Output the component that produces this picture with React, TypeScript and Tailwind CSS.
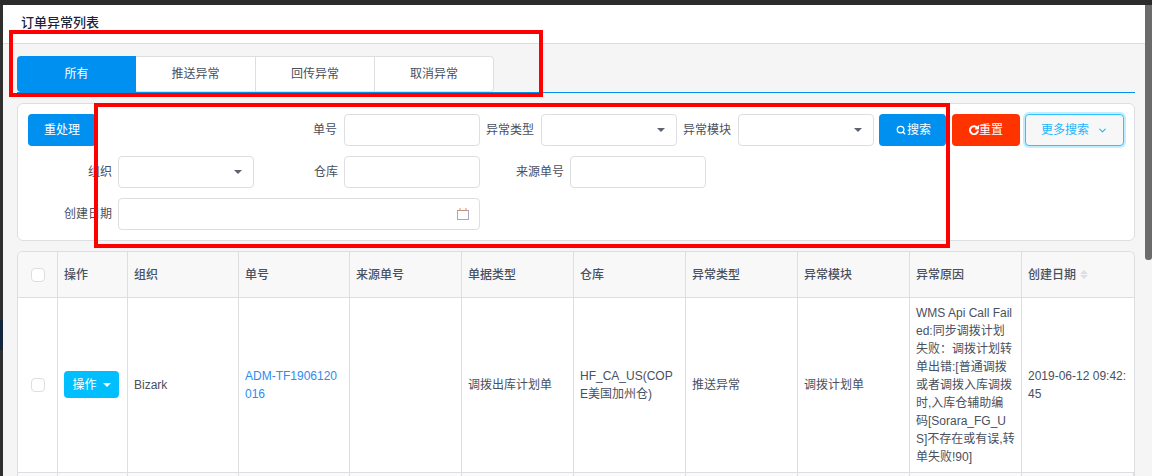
import type { ReactNode } from 'react'
import { ChevronDown, Search } from 'lucide-react'

const font = "font-['Liberation_Sans','Noto_Sans_CJK_SC',sans-serif]"

function Caret({ className = 'border-t-[#5c6270]' }: { className?: string }) {
  return <span className={`block h-0 w-0 border-x-[4px] border-t-[4px] border-x-transparent ${className}`} />
}

function Label({ children, className = '' }: { children: string; className?: string }) {
  return <span className={`shrink-0 text-right text-[12px] leading-8 text-[#495060] ${className}`}>{children}</span>
}

function Input({ className = 'w-[136px]' }: { className?: string }) {
  return <div className={`h-8 shrink-0 rounded border border-[#dddee1] bg-white ${className}`} />
}

function Select() {
  return (
    <div className="flex h-8 w-[136px] shrink-0 items-center justify-end rounded border border-[#dddee1] bg-white pr-[11px]">
      <Caret />
    </div>
  )
}

function CalendarIcon() {
  return (
    <svg width="14" height="14" viewBox="0 0 14 14" fill="none">
      <rect x="1.5" y="3.5" width="11" height="9" stroke="#a9a3c4" />
      <path d="M1.5 3.5h11M4 1v2.5M10 1v2.5" stroke="#c98f7d" />
    </svg>
  )
}

function Th({ children, className = '' }: { children?: ReactNode; className?: string }) {
  return (
    <div className={`flex h-[45px] items-center border-r border-[#dddee1] px-[6px] text-[12px] font-medium text-[#495060] ${className}`}>
      {children}
    </div>
  )
}

function Td({ children, className = '' }: { children?: ReactNode; className?: string }) {
  return (
    <div className={`flex items-center border-r border-[#dddee1] px-[6px] text-[12px] leading-[18px] text-[#495060] ${className}`}>
      <div className="min-w-0 break-all">{children}</div>
    </div>
  )
}

const grid = 'grid grid-cols-[40px_70px_111px_111px_112px_112px_112px_112px_112px_112px_112px]'

export default function App() {
  return (
    <div className={`relative h-[476px] w-[1152px] overflow-hidden bg-[#f5f5f5] ${font}`}>
      <div className="h-[5px] bg-[#2b2b2b]" />
      <div className="flex">
        <div className="h-[471px] w-[3px] shrink-0 bg-[#2f2f2f]">
          <div className="mt-[315px] h-[30px] bg-[#14263c]" />
        </div>
        <div className="w-[1142px] shrink-0">
          <div className="flex h-[39px] items-center border-b border-[#dddddd] bg-white pb-[4px] pl-[18px] text-[13px] font-medium leading-none text-[#1c2438]">
            订单异常列表
          </div>
          <div className="ml-[14px] mr-[10px] mt-[12px] flex h-[37px] border-b border-[#0090f0] text-[12px] text-[#495060]">
            <div className="flex h-[36px] w-[119px] items-center justify-center rounded-l bg-[#0090f0] text-white">所有</div>
            <div className="flex h-[36px] w-[120px] items-center justify-center border-y border-r border-[#dddee1] bg-white">推送异常</div>
            <div className="flex h-[36px] w-[119px] items-center justify-center border-y border-r border-[#dddee1] bg-white">回传异常</div>
            <div className="flex h-[36px] w-[119px] items-center justify-center rounded-r border-y border-r border-[#dddee1] bg-white">取消异常</div>
          </div>
          <div className="ml-[14px] mr-[10px] mt-[10px] h-[138px] rounded-md border border-[#dddee1] bg-white px-[10px] pt-[10px]">
            <div className="flex h-8 items-center">
              <button className="h-8 w-[68px] rounded bg-[#0090f0] text-[12px] text-white">重处理</button>
              <Label className="ml-[210px] w-[31px]">单号</Label>
              <Input className="ml-[7px] w-[136px]" />
              <Label className="ml-[6px] w-[48px]">异常类型</Label>
              <div className="ml-[7px]"><Select /></div>
              <Label className="ml-[6px] w-[48px]">异常模块</Label>
              <div className="ml-[7px]"><Select /></div>
              <button className="ml-[5px] flex h-8 w-[67px] items-center justify-center gap-px rounded bg-[#0090f0] pl-[2px] text-[12px] text-white">
                <Search size={10} strokeWidth={3} />搜索
              </button>
              <button className="ml-[6px] flex h-8 w-[68px] items-center justify-center rounded bg-[#ff3300] text-[12px] text-white">
                <svg width="10" height="10" viewBox="0 0 10 10" fill="none" stroke="white" strokeWidth="2"><path d="M8.5 3.2A4 4 0 1 0 9 5.5" /><path d="M9.5 0.5v3.5h-3.5" strokeWidth="1" fill="white" /></svg>
                重置
              </button>
              <button className="ml-[5px] flex h-8 w-[99px] items-center justify-center gap-2 rounded border border-[#33c2ff] bg-[#f7f7f7] text-[12px] text-[#19b5fe] shadow-[0_0_0_2px_rgba(51,194,255,0.3)]">
                更多搜索<ChevronDown size={11} strokeWidth={2.5} className="text-[#2bb3ee]" />
              </button>
            </div>
            <div className="mt-[10px] flex h-8 items-center">
              <Label className="w-[84px]">组织</Label>
              <div className="ml-[6px]"><Select /></div>
              <Label className="ml-[54px] w-[30px]">仓库</Label>
              <Input className="ml-[6px] w-[136px]" />
              <Label className="ml-[36px] w-[48px]">来源单号</Label>
              <Input className="ml-[6px] w-[136px]" />
            </div>
            <div className="mt-[10px] flex h-8 items-center">
              <Label className="w-[84px]">创建日期</Label>
              <div className="ml-[6px] flex h-8 w-[362px] items-center justify-end rounded border border-[#dddee1] bg-white pr-[9px]">
                <CalendarIcon />
              </div>
            </div>
          </div>
          <div className="ml-[14px] mr-[10px] mt-[10px] overflow-hidden rounded-t-md border-x border-t border-[#dddee1] bg-white">
            <div className={`${grid} border-b border-[#dddee1] bg-[#f8f8f9]`}>
              <Th className="justify-center"><span className="block h-[14px] w-[14px] rounded-sm border border-[#dddee1] bg-white" /></Th>
              <Th>操作</Th>
              <Th>组织</Th>
              <Th>单号</Th>
              <Th>来源单号</Th>
              <Th>单据类型</Th>
              <Th>仓库</Th>
              <Th>异常类型</Th>
              <Th>异常模块</Th>
              <Th>异常原因</Th>
              <Th className="gap-1 border-r-0">创建日期
                <span className="flex flex-col gap-px">
                  <span className="block h-0 w-0 border-x-[4px] border-b-[4px] border-x-transparent border-b-[#dddee1]" />
                  <span className="block h-0 w-0 border-x-[4px] border-t-[4px] border-x-transparent border-t-[#dddee1]" />
                </span>
              </Th>
            </div>
            <div className={`${grid} h-[175px] border-b border-[#dddee1]`}>
              <Td className="justify-center"><span className="block h-[14px] w-[14px] rounded-sm border border-[#dddee1] bg-white" /></Td>
              <Td>
                <button className="-mt-px flex h-[27px] w-[55px] items-center justify-center gap-[6px] rounded bg-[#00bfff] text-[12px] text-white">操作<Caret className="border-t-white" /></button>
              </Td>
              <Td>Bizark</Td>
              <Td><span className="text-[#2d8cf0]">ADM-TF1906120016</span></Td>
              <Td />
              <Td>调拨出库计划单</Td>
              <Td>HF_CA_US(COPE美国加州仓)</Td>
              <Td>推送异常</Td>
              <Td>调拨计划单</Td>
              <Td>WMS Api Call Failed:同步调拨计划失败：调拨计划转单出错:[普通调拨或者调拨入库调拨时,入库仓辅助编码[Sorara_FG_US]不存在或有误,转单失败!90]</Td>
              <Td className="border-r-0">2019-06-12 09:42:45</Td>
            </div>
            <div className={`${grid} h-[20px] bg-[#fafafc]`}>
              {Array.from({ length: 11 }).map((_, i) => (
                <div key={i} className="border-r border-[#dddee1]" />
              ))}
            </div>
          </div>
        </div>
        <div className="h-[255px] w-[7px] shrink-0 rounded-b-[3px] bg-[#6b6b6b]" />
      </div>
      <div className="absolute left-[9px] top-[30px] h-[67px] w-[534px] border-[4px] border-[#ff0000]" />
      <div className="absolute left-[94px] top-[103px] h-[145px] w-[856px] border-[4px] border-[#ff0000]" />
    </div>
  )
}
